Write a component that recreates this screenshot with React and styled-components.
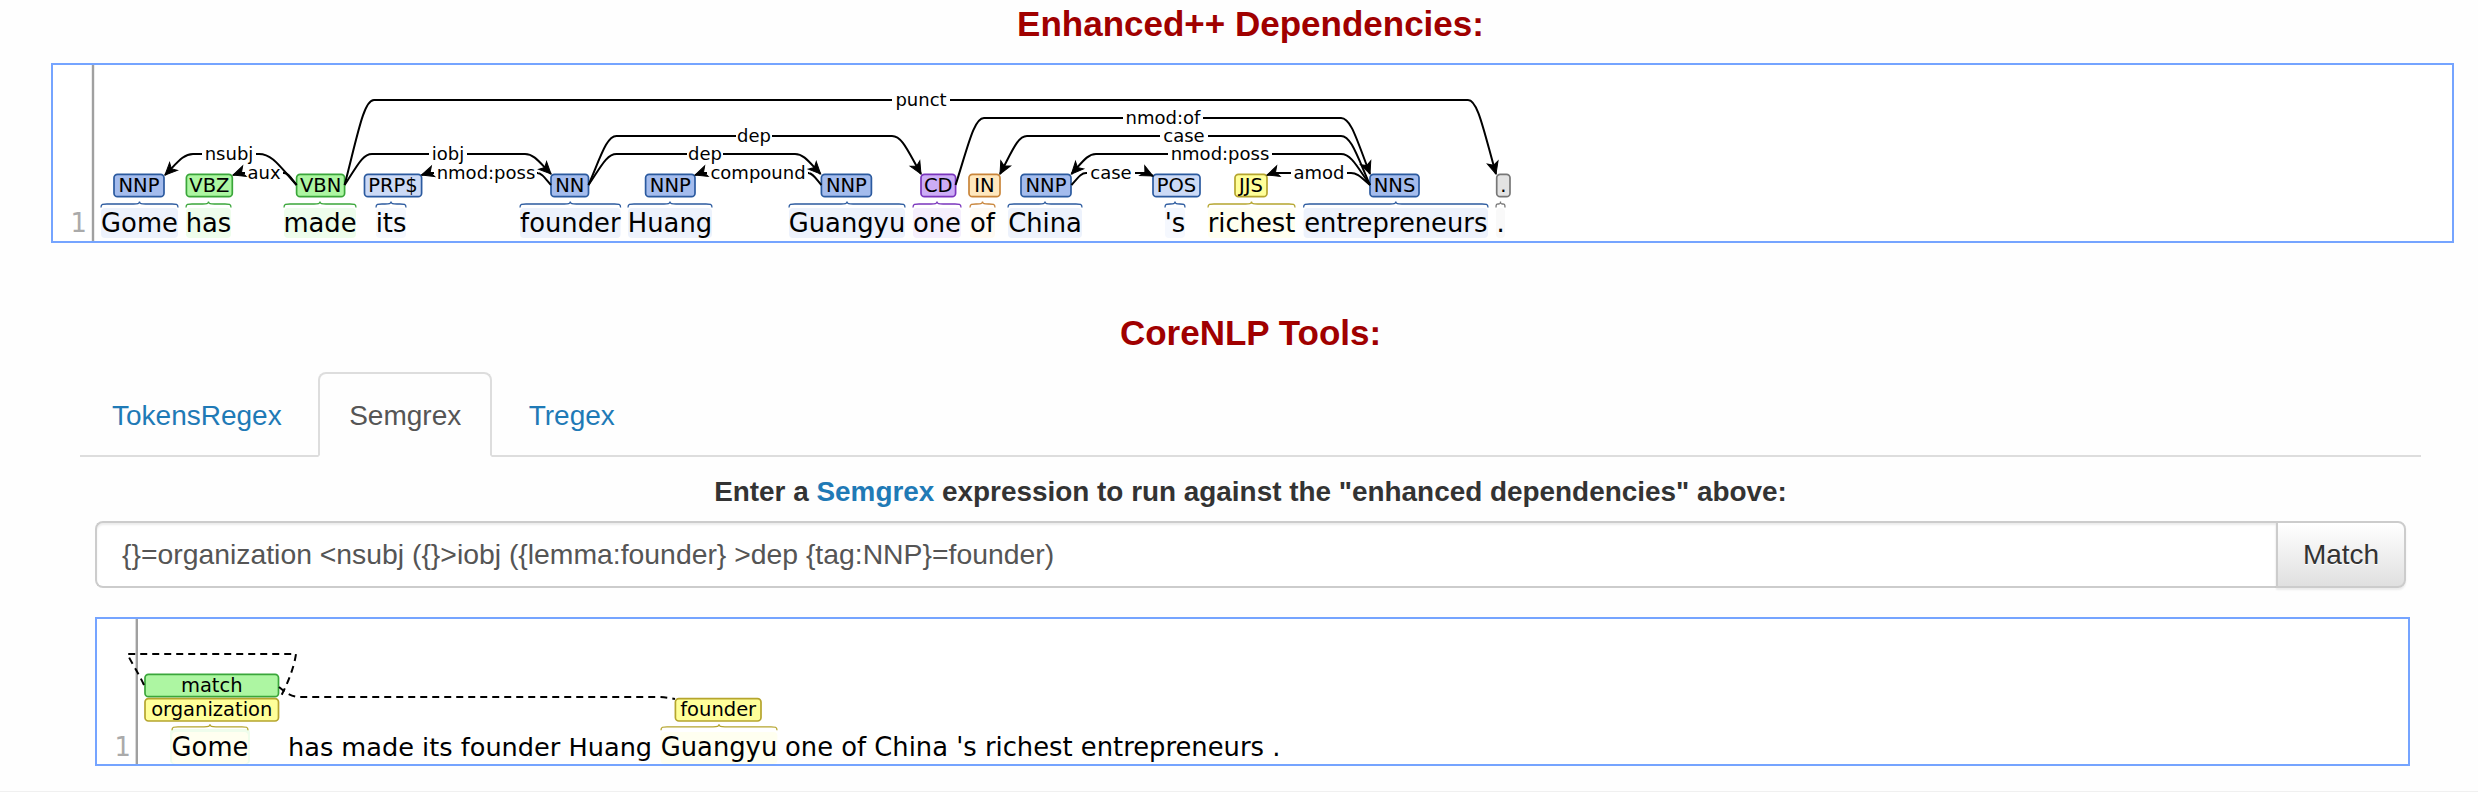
import React from 'react';
import styled, { createGlobalStyle } from 'styled-components';

const Global = createGlobalStyle`
  html, body { margin: 0; padding: 0; background: #fefefe; }
  * { box-sizing: border-box; }
`;

const Page = styled.div`
  width: 2478px;
  height: 792px;
  overflow: hidden;
  display: flex;
  flex-direction: column;
  font-family: "Liberation Sans", Arial, sans-serif;
  color: #333;
`;
const Title = styled.h2`
  margin: ${p => p.$top}px 0 0;
  height: 48px;
  line-height: 48px;
  font-size: 35px;
  font-weight: 700;
  text-align: center;
  color: #a00000;
  padding-left: 23px;
`;
const Panel = styled.div`
  margin: ${p => p.$top}px 0 0 ${p => p.$left}px;
  width: ${p => p.$width}px;
  height: ${p => p.$height}px;
  border: 2px solid #75a4ff;
  background: #fff;
  flex: none;
`;
const Diagram = styled.svg`
  display: block;
  width: 100%;
  height: 100%;
  font-family: "DejaVu Sans", sans-serif;
`;
const Tabs = styled.nav`
  margin: 15px 0 0 80px;
  width: 2341px;
  height: 85px;
  display: flex;
  gap: 5.5px;
  align-items: stretch;
  border-bottom: 2px solid #ddd;
  padding-left: 1px;
  flex: none;
`;
const Tab = styled.a`
  display: flex;
  align-items: center;
  justify-content: center;
  height: 85px;
  padding: 3px 29px 0;
  font-size: 28px;
  color: ${p => (p.$active ? '#555' : '#1f7ab6')};
  border: 2px solid ${p => (p.$active ? '#ddd' : 'transparent')};
  border-bottom-color: ${p => (p.$active ? '#fefefe' : 'transparent')};
  border-radius: 8px 8px 0 0;
`;
const Prompt = styled.div`
  margin-top: 17px;
  height: 36px;
  line-height: 36px;
  font-size: 27.9px;
  font-weight: 700;
  text-align: center;
  padding-left: 23px;
  flex: none;
`;
const Accent = styled.span`
  color: #1f7ab6;
`;
const InputGroup = styled.div`
  margin: 11px 0 0 95px;
  width: 2311px;
  height: 67px;
  display: flex;
  flex: none;
`;
const Query = styled.div`
  flex: 1;
  display: flex;
  align-items: center;
  padding-left: 25px;
  font-size: 28.35px;
  color: #555;
  background: #fff;
  border: 2px solid #ccc;
  border-right: 0;
  border-radius: 8px 0 0 8px;
  box-shadow: inset 0 2px 2px rgba(0, 0, 0, 0.075);
`;
const MatchButton = styled.button`
  width: 130px;
  font: 28px "Liberation Sans", Arial, sans-serif;
  color: #333;
  background: linear-gradient(#fff, #e0e0e0);
  border: 2px solid #ccc;
  border-radius: 0 8px 8px 0;
  text-shadow: 0 1px 0 #fff;
  box-shadow: 0 2px 2px rgba(0, 0, 0, 0.075);
  padding: 0;
`;
const Footer = styled.div`
  margin-top: 25px;
  height: 2px;
  background: #f0f0f0;
  flex: none;
`;

const TAG = {
  blue: ['#a4bced', '#2b5a9f'],
  pale: ['#ccdaf6', '#2b5a9f'],
  green: ['#adf6a2', '#3aa63a'],
  violet: ['#ccadf6', '#7a35bd'],
  orange: ['#ffe8be', '#c9853a'],
  yellow: ['#ffff99', '#b5a52e'],
  gray: ['#e3e3e3', '#777'],
};
const WASH = {
  blue: '#edf2fc',
  pale: '#f5f8fe',
  green: '#eefdec',
  violet: '#f5effd',
  orange: '#fffaf2',
  yellow: '#fffff0',
  gray: '#f9f9f9',
};

const tokens = [
  ['Gome', 'NNP', 'blue', 114, 164, 101, 178],
  ['has', 'VBZ', 'green', 186.4, 232.3, 186, 231],
  ['made', 'VBN', 'green', 296.6, 344.6, 284, 356],
  ['its', 'PRP$', 'pale', 364.5, 421.6, 376, 406],
  ['founder', 'NN', 'blue', 551, 588.5, 520, 620.6],
  ['Huang', 'NNP', 'blue', 645.6, 695, 628, 712],
  ['Guangyu', 'NNP', 'blue', 821.4, 871.4, 789, 905],
  ['one', 'CD', 'violet', 921, 955.6, 913, 961],
  ['of', 'IN', 'orange', 969, 1000, 970, 995],
  ['China', 'NNP', 'blue', 1021, 1071, 1008, 1082],
  ["'s", 'POS', 'pale', 1153, 1200, 1165, 1185],
  ['richest', 'JJS', 'yellow', 1235, 1267, 1208, 1295],
  ['entrepreneurs', 'NNS', 'blue', 1370, 1419, 1303.6, 1488],
  ['.', '.', 'gray', 1496.7, 1510, 1496, 1505],
];

// l / r: [x, y, bendX]; y: level; c, hw: label centre and half gap; head: arrow end
const arcs = [
  ['punct', [344.6, 185, 374], [1496, 174, 1468], 100, 921, 29, 'r'],
  ['nsubj', [165, 175, 193], [296.6, 185, 259], 154, 229, 27, 'l'],
  ['aux', [233, 175, 241], [296.6, 185, 284], 173, 264, 19, 'l'],
  ['iobj', [344.6, 185, 372], [551, 174, 525], 154, 448, 19, 'r'],
  ['nmod:poss', [421.6, 175, 430], [551, 185, 537], 173, 486, 52, 'l'],
  ['dep', [588.5, 185, 616.5], [921, 174, 892], 136, 754, 18, 'r'],
  ['dep', [588.5, 185, 616.5], [820.6, 174, 795], 154, 705, 18, 'r'],
  ['compound', [695, 175, 703], [821.4, 185, 808], 173, 758, 51, 'l'],
  ['nmod:of', [955.6, 185, 984], [1370, 174, 1341], 118, 1163, 40, 'r'],
  ['case', [1000, 174, 1027], [1370, 185, 1341], 136, 1184, 24, 'l'],
  ['nmod:poss', [1071.4, 174, 1096], [1370, 185, 1341], 154, 1220, 52, 'l'],
  ['case', [1071.4, 185, 1086], [1153, 176, 1145], 173, 1111, 24, 'r'],
  ['amod', [1267, 175, 1275], [1370, 185, 1351], 173, 1319, 28, 'l'],
];

const ctrl = ([x, y, b], ly) => [
  [x + (b - x) * 0.45, y - (y - ly) * 0.6],
  [b - (b - x) * 0.35, ly],
];

function Arrow({ tip, from }) {
  const a = (Math.atan2(tip[1] - from[1], tip[0] - from[0]) * 180) / Math.PI;
  return (
    <polygon
      points="0,0 -12,-5.5 -9,0 -12,5.5"
      fill="#000"
      stroke="#000"
      strokeWidth="1"
      transform={`translate(${tip[0]} ${tip[1]}) rotate(${a})`}
    />
  );
}

function Arc({ label, l, r, y, c, hw, head }) {
  const [l1, l2] = ctrl(l, y);
  const [r1, r2] = ctrl(r, y);
  const d = `M${l[0]},${l[1]} C${l1} ${l2} ${l[2]},${y} L${c - hw},${y} M${c + hw},${y} L${r[2]},${y} C${r2} ${r1} ${r[0]},${r[1]}`;
  return (
    <g>
      <path d={d} fill="none" stroke="#000" strokeWidth="2" />
      {head === 'r' ? <Arrow tip={r} from={r1} /> : <Arrow tip={l} from={l1} />}
      <text x={c} y={y + 6} fontSize="18" textAnchor="middle" fill="#000">{label}</text>
    </g>
  );
}

const bracePath = (a, b, top) => {
  const m = (a + b) / 2;
  const y = top + 2.5;
  const r = Math.min(6, (b - a) / 4);
  return `M${a},${top + 6} C${a},${y} ${a + r / 3},${y} ${a + r},${y} L${m - r},${y} C${m - r / 3},${y} ${m},${y} ${m},${top} C${m},${y} ${m + r / 3},${y} ${m + r},${y} L${b - r},${y} C${b - r / 3},${y} ${b},${y} ${b},${y + 3.5}`;
};

function Tag({ x0, x1, y, kind, label, size = 19.5 }) {
  const [fill, stroke] = TAG[kind];
  return (
    <g>
      <rect x={x0} y={y} width={x1 - x0} height={22.4} rx="3.5" fill={fill} stroke={stroke} strokeWidth="1.7" />
      <text x={(x0 + x1) / 2} y={y + 17.5} fontSize={size} textAnchor="middle" fill="#000">{label}</text>
    </g>
  );
}

function Gutter({ x, numX, y, top, bottom }) {
  return (
    <g>
      <line x1={x} x2={x} y1={top} y2={bottom} stroke="#a0a0a0" strokeWidth="2.4" />
      <text x={numX} y={y} fontSize="25.8" textAnchor="end" fill="#aaa">1</text>
    </g>
  );
}

function DependencyGraph() {
  return (
    <Diagram viewBox="53 65 2399 176">
      <Gutter x={93} numX={87} y={232} top={65} bottom={241} />
      {tokens.map(([word, tag, kind, tx0, tx1, wx0, wx1]) => {
        const brace = TAG[kind][1];
        return (
          <g key={word}>
            <rect x={wx0} y={208} width={wx1 - wx0} height={30} rx="4" fill={WASH[kind]} />
            <path d={bracePath(wx0, wx1, 201.5)} fill="none" stroke={brace} strokeWidth="1.3" />
            <Tag x0={tx0} x1={tx1} y={174.3} kind={kind} label={tag} />
            <text x={(wx0 + wx1) / 2} y={231.5} fontSize="25.8" textAnchor="middle" fill="#000">{word}</text>
          </g>
        );
      })}
      {arcs.map(([label, l, r, y, c, hw, head], i) => (
        <Arc key={i} label={label} l={l} r={r} y={y} c={c} hw={hw} head={head} />
      ))}
    </Diagram>
  );
}

function MatchGraph() {
  return (
    <Diagram viewBox="97 619 2311 145">
      <Gutter x={136.8} numX={131} y={756} top={619} bottom={764} />
      <rect x={170} y={729} width={80} height={35} rx="4" fill="#effdec" />
      <rect x={172} y={732} width={76} height={32} rx="4" fill="#fffff0" />
      <rect x={660.6} y={732} width={116.8} height={32} rx="4" fill="#fffff0" />
      <path d={bracePath(172, 248, 724.3)} fill="none" stroke="#b5a52e" strokeWidth="1.3" />
      <path d={bracePath(661, 777, 724.3)} fill="none" stroke="#b5a52e" strokeWidth="1.3" />
      <Tag x0={145} x1={278.5} y={674.3} kind="green" label="match" />
      <Tag x0={145} x1={278.5} y={698.6} kind="yellow" label="organization" />
      <Tag x0={675.4} x1={761} y={698.6} kind="yellow" label="founder" />
      <path
        d="M144,685 C138,672 131,662 127.4,654 L296,654 C294,668 287,685 280,698"
        fill="none" stroke="#000" strokeWidth="2" strokeDasharray="7 5"
      />
      <path
        d="M279,687 C285,692 291,697 300,697 L656.5,697 C664,697 670,698 675,699"
        fill="none" stroke="#000" strokeWidth="2" strokeDasharray="7 5"
      />
      <text x={210} y={755.5} fontSize="25.8" textAnchor="middle" fill="#000">Gome</text>
      <text x={288} y={755.5} fontSize="25.6" fill="#000">has made its founder Huang</text>
      <text x={719} y={755.5} fontSize="25.8" textAnchor="middle" fill="#000">Guangyu</text>
      <text x={785} y={755.5} fontSize="25.8" fill="#000">one of China 's richest entrepreneurs .</text>
    </Diagram>
  );
}

export default function App() {
  return (
    <Page>
      <Global />
      <Title $top={0}>Enhanced++ Dependencies:</Title>
      <Panel $top={15} $left={51} $width={2403} $height={180}>
        <DependencyGraph />
      </Panel>
      <Title $top={66}>CoreNLP Tools:</Title>
      <Tabs>
        <Tab>TokensRegex</Tab>
        <Tab $active>Semgrex</Tab>
        <Tab>Tregex</Tab>
      </Tabs>
      <Prompt>
        Enter a <Accent>Semgrex</Accent> expression to run against the "enhanced dependencies" above:
      </Prompt>
      <InputGroup>
        <Query>{'{}=organization <nsubj ({}>iobj ({lemma:founder} >dep {tag:NNP}=founder)'}</Query>
        <MatchButton>Match</MatchButton>
      </InputGroup>
      <Panel $top={29} $left={95} $width={2315} $height={149}>
        <MatchGraph />
      </Panel>
      <Footer />
    </Page>
  );
}
